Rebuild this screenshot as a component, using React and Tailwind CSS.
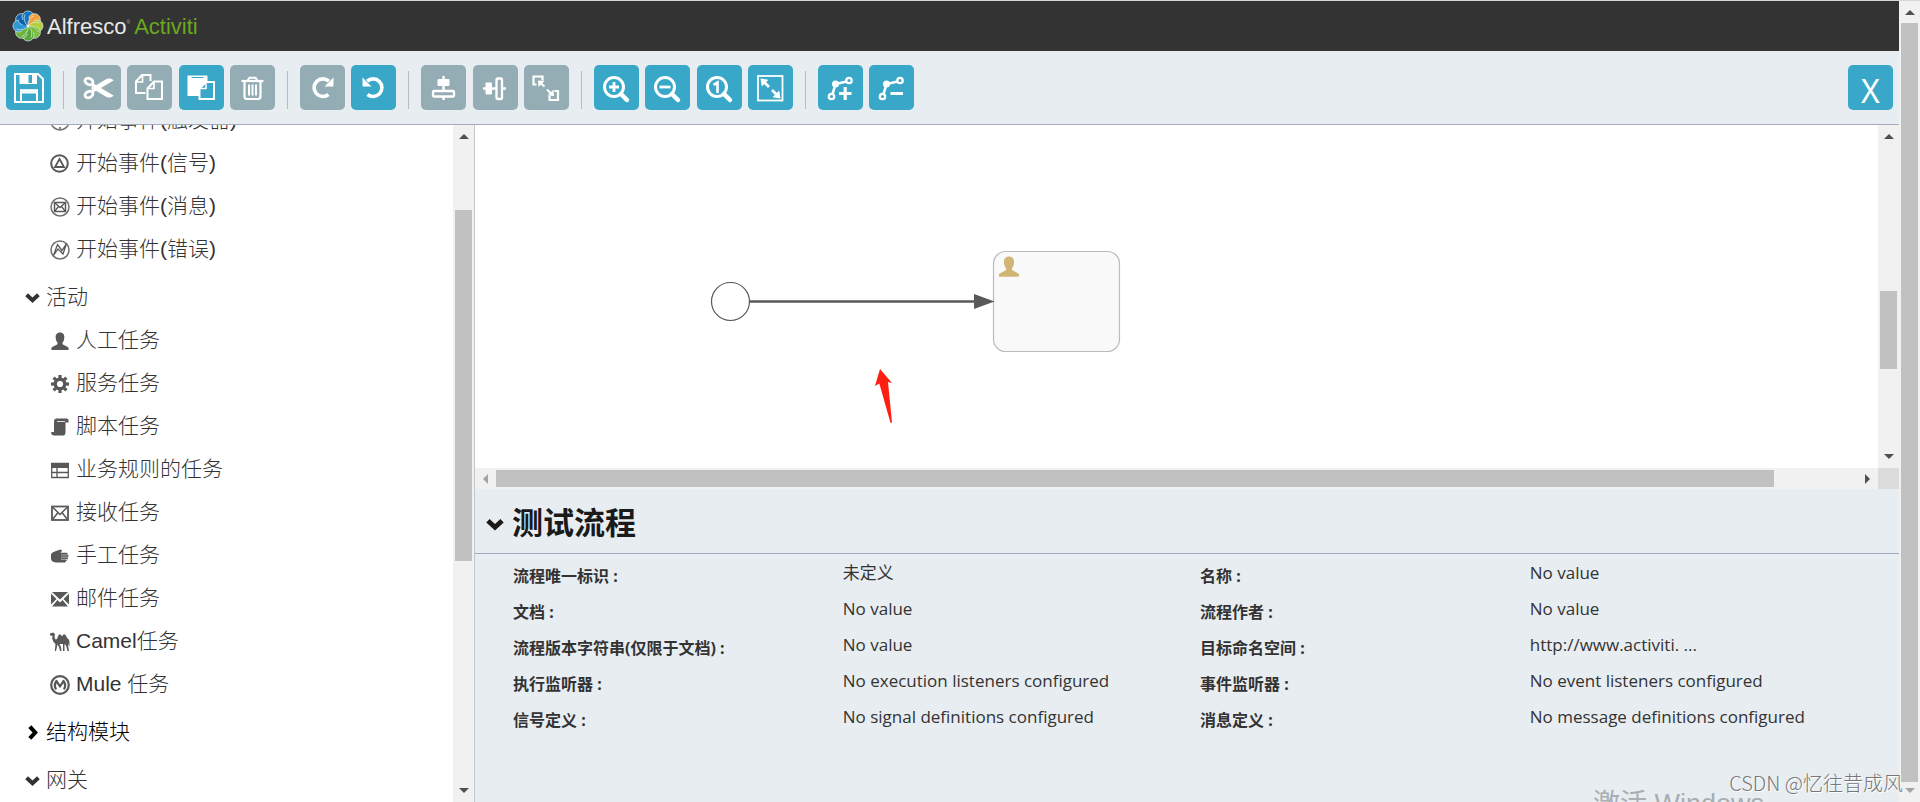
import React from "react";

const LATIN_CJK = "font-['Liberation_Sans','Noto_Sans_CJK_SC',sans-serif]";

function Pinwheel() {
  const petals = [
    ["#0b62ab", 315], ["#1278be", 0], ["#f6a03c", 45], ["#b5cf3a", 90],
    ["#7cbf3c", 135], ["#57a639", 180], ["#6fb53a", 225], ["#2f97d3", 270],
  ];
  return (
    <svg viewBox="0 0 32 32" className="size-8 shrink-0" aria-hidden="true">
      {petals.map(([c, a]) => (
        <circle key={a} cx="16" cy="7" r="6" fill={c} stroke="#dcebf2" strokeWidth=".7" transform={`rotate(${a} 16 16)`} />
      ))}
      {petals.map(([c, a]) => (
        <g key={a} transform={`rotate(${a} 16 16)`}>
          <path d="M16 16C12 12.500 11.500 8 13 4.500C17.500 6.500 18.500 12 16 16Z" fill={c} />
          <path d="M16 16C12 12.500 11.500 8 13 4.500" fill="none" stroke="#e3f0f5" strokeWidth=".7" />
        </g>
      ))}
      <circle cx="16" cy="16" r="1.300" fill="#fff" />
    </svg>
  );
}

const S = ({ children }) => (
  <svg viewBox="0 0 45 45" className="size-full" fill="none" stroke="#fff" strokeWidth="2" aria-hidden="true">
    {children}
  </svg>
);

const Magnifier = ({ children }) => (
  <S>
    <circle cx="20" cy="22" r="9.500" strokeWidth="3" />
    <path d="M27 29l6 6" strokeWidth="4.500" strokeLinecap="round" />
    {children}
  </S>
);

const Nodes = ({ children }) => (
  <S>
    <path d="M14 31L17.500 19L31 16" strokeWidth="2.600" />
    <circle cx="17.500" cy="19" r="3.500" fill="#fff" stroke="none" />
    <circle cx="31" cy="15.500" r="2.700" fill="#38a7c8" strokeWidth="2.300" />
    <circle cx="13.500" cy="31.500" r="2.700" fill="#38a7c8" strokeWidth="2.300" />
    {children}
  </S>
);

const toolIcons = {
  save: (
    <S>
      <path d="M9 9H32L37 14V37H9Z" strokeWidth="2" />
      <path d="M15 36V27.500H31V36" />
      <path d="M14 25.500H32" strokeWidth="2.600" />
      <path d="M13.500 9H31V19H13.500Z" fill="#fff" stroke="none" />
      <rect x="22.500" y="10" width="3.500" height="8" fill="#38a7c8" stroke="none" />
    </S>
  ),
  cut: (
    <S>
      <ellipse cx="13" cy="16.500" rx="4.200" ry="3" transform="rotate(25 13 16.500)" strokeWidth="2.800" />
      <ellipse cx="13" cy="29.500" rx="4.200" ry="3" transform="rotate(-25 13 29.500)" strokeWidth="2.800" />
      <path d="M16.500 18L37.500 30.500C35.500 33.200 32 32.800 30 31.800L15.500 23Z" fill="#fff" stroke="none" />
      <path d="M16.500 28L37.500 15.500C35.500 12.800 32 13.200 30 14.200L15.500 23Z" fill="#fff" stroke="none" />
    </S>
  ),
  copy: (
    <S>
      <path d="M18.500 28H9V16.500L15 10H23.500V16" strokeWidth="2" />
      <path d="M15.500 10V17H9" strokeWidth="1.700" />
      <path d="M27 16.500H35V34H20.500V23.500Z" strokeWidth="2" />
      <path d="M27 16.500V23.500H20.500" strokeWidth="1.700" />
    </S>
  ),
  paste: (
    <S>
      <path d="M8.500 10.500H28.500V16.500L20 24V31H8.500Z" fill="#fff" stroke="none" />
      <path d="M12.500 12.500H24.500" stroke="#38a7c8" strokeWidth="1" />
      <path d="M27 17H35V34H20.500V23.500Z" strokeWidth="2" />
      <path d="M27 17V23.500H20.500" strokeWidth="1.500" />
    </S>
  ),
  trash: (
    <S>
      <path d="M11.500 16H33.500" strokeWidth="2.200" />
      <path d="M17.500 15.500L19.500 12.800H25.500L27.500 15.500" strokeWidth="2" />
      <path d="M14.500 17V31.500Q14.500 34 17 34H28Q30.500 34 30.500 31.500V17" strokeWidth="2.200" />
      <path d="M19 19.500V30.500M22.500 19.500V30.500M26 19.500V30.500" strokeWidth="2" />
    </S>
  ),
  redo: (
    <S>
      <path d="M28.500 29.500A8.800 8.800 0 1 1 28.800 16.200" strokeWidth="3.600" />
      <path d="M33.500 12.500V21.500H24.500Z" fill="#fff" stroke="none" />
    </S>
  ),
  undo: (
    <S>
      <path d="M16.500 29.500A8.800 8.800 0 1 0 16.200 16.200" strokeWidth="3.600" />
      <path d="M11.500 12.500V21.500H20.500Z" fill="#fff" stroke="none" />
    </S>
  ),
  alignV: (
    <S>
      <path d="M22.500 11V35" strokeWidth="2.500" />
      <rect x="16.500" y="14" width="12" height="7" rx="1" fill="#fff" stroke="none" />
      <rect x="12" y="26" width="21" height="5.500" rx="1" fill="#94adb4" strokeWidth="2.300" />
    </S>
  ),
  alignH: (
    <S>
      <path d="M10 23.500H33" strokeWidth="2.500" />
      <rect x="12.500" y="17.500" width="6.500" height="12" rx="1" fill="#fff" stroke="none" />
      <rect x="23.500" y="13.500" width="5.500" height="20.500" rx="1" fill="#94adb4" strokeWidth="2.300" />
    </S>
  ),
  sameSize: (
    <S>
      <path d="M12.500 19.500H9.500V11.500H18.500V15.500" strokeWidth="2.200" />
      <path d="M30.500 26H34V35H25.500V31" strokeWidth="2.200" />
      <path d="M14 15.500L20.500 16L14.500 22ZM30 31L23.500 30.500L29.500 24.500Z" fill="#fff" stroke="none" />
      <path d="M16 17.500L20.500 21.500M23 24.500L27 28.500" strokeWidth="2" />
    </S>
  ),
  zoomIn: <Magnifier><path d="M15 22H25M20 17V27" strokeWidth="2.800" /></Magnifier>,
  zoomOut: <Magnifier><path d="M14.500 22H25.500" strokeWidth="2.800" /></Magnifier>,
  zoomActual: <Magnifier><path d="M16.500 19.800L20.500 17.500V28" strokeWidth="2.600" /></Magnifier>,
  zoomFit: (
    <S>
      <rect x="10" y="11" width="24.500" height="24.500" strokeWidth="1.800" />
      <path d="M12.500 13.500L20.500 14.800L13.800 21.500ZM32.500 33.500L24.500 32.200L31.200 25.500Z" fill="#fff" stroke="none" />
      <path d="M15.500 16.500L21 22M24 25L29.500 30.500" strokeWidth="2.800" />
    </S>
  ),
  addBend: <Nodes><path d="M21 28.500H33.500M27.200 22V35" strokeWidth="3.200" /></Nodes>,
  removeBend: <Nodes><path d="M21.500 28.500H34" strokeWidth="3" /></Nodes>,
};

const groups = [
  { width: "w-[45px]", items: [["save", "保存", true]] },
  { width: "w-[199px]", items: [["cut", "剪切", false], ["copy", "复制", false], ["paste", "粘贴", true], ["trash", "删除", false]] },
  { width: "w-[96px]", items: [["redo", "重做", false], ["undo", "撤销", true]] },
  { width: "w-[148px]", items: [["alignV", "垂直对齐", false], ["alignH", "水平对齐", false], ["sameSize", "相同大小", false]] },
  { width: "w-[199px]", items: [["zoomIn", "放大", true], ["zoomOut", "缩小", true], ["zoomActual", "实际大小", true], ["zoomFit", "适合屏幕", true]] },
  { width: "w-[96px]", items: [["addBend", "添加拐点", true], ["removeBend", "删除拐点", true]] },
];

function Toolbar() {
  return (
    <div className="flex h-[74px] shrink-0 items-start justify-between border-b border-[#a3abbd] bg-[#e8edf1] px-1.5 pt-3.5">
      <div className="flex">
        {groups.map((g, i) => (
          <React.Fragment key={i}>
            {i > 0 && <div className="mx-3 mt-1.5 h-[38px] w-px bg-[#b4bcc7]" />}
            <div className={`flex justify-between ${g.width}`}>
              {g.items.map(([icon, label, on]) => (
                <button
                  key={icon}
                  type="button"
                  aria-label={label}
                  disabled={!on}
                  className={`size-[45px] rounded-[5px] ${on ? "bg-[#38a7c8]" : "bg-[#94adb4]"}`}
                >
                  {toolIcons[icon]}
                </button>
              ))}
            </div>
          </React.Fragment>
        ))}
      </div>
      <button type="button" className="flex size-[45px] items-center justify-center rounded-[5px] bg-[#38a7c8] pt-1.5 font-['Noto_Sans',sans-serif] text-[32px] leading-none text-white">
        X
      </button>
    </div>
  );
}

const P = ({ children }) => (
  <svg viewBox="0 0 20 20" className="mt-[3px] size-5 shrink-0" fill="none" stroke="#585858" strokeWidth="1.500" aria-hidden="true">
    {children}
  </svg>
);
const F = { fill: "#585858", stroke: "none" };
const Ring = () => <circle cx="10" cy="10" r="9" stroke="#707070" />;

const USER_PATH = "M10 .5C13.500 .5 15 3 14.800 6C14.700 8.500 14 10.500 12.800 11.700V13.500L19.500 17.200V20H.5V17.200L7.200 13.500V11.700C6 10.500 5.300 8.500 5.200 6C5 3 6.500 .5 10 .5Z";

const paletteIcons = {
  timer: <P><Ring /><path d="M10 16v2" /></P>,
  signal: <P><circle cx="9.500" cy="9.500" r="8.300" strokeWidth="2" /><path d="M9.500 5L14 13H5Z" strokeWidth="1.800" /></P>,
  message: <P><Ring /><rect x="4.500" y="5.500" width="11" height="9" /><path d="M4.500 5.500L10 10.500L15.500 5.500M4.500 14.500L8.500 9.500M15.500 14.500L11.500 9.500" strokeWidth="1.300" /></P>,
  error: <P><Ring /><path d="M3.500 15.500L7.500 4.500L12 10.500L16.500 3.500L13 14L8 9Z" strokeWidth="1.300" /></P>,
  user: <P><path {...F} transform="translate(1 1) scale(.9)" d={USER_PATH} /></P>,
  service: (
    <P>
      <circle cx="10" cy="10" r="4.800" strokeWidth="3.400" />
      {[0, 45, 90, 135, 180, 225, 270, 315].map((a) => (
        <rect key={a} {...F} x="8.400" y="1" width="3.200" height="3.500" transform={`rotate(${a} 10 10)`} />
      ))}
    </P>
  ),
  script: <P><path {...F} d="M6 1.500H17Q19 2 18.500 5.500H15.500V15Q15.500 18.500 13 18.500H3.500Q1 18 1.200 15H4V4Q4 2 6 1.500Z" /><path d="M7 4.500H15" stroke="#fff" strokeWidth=".8" /></P>,
  rule: <P><path d="M1.700 3.500H18.300V17.500H1.700ZM1.700 12.500H18.300M7 7V17.500" strokeWidth="1.300" /><path {...F} d="M1 3H19V8H1Z" /></P>,
  receive: <P><rect x="2" y="3.500" width="16" height="13.500" strokeWidth="1.800" /><path d="M3 4.500L10 11.500L17 4.500M3 16L8 9.500M17 16L12 9.500" strokeWidth="1.500" /></P>,
  manual: <P><path {...F} d="M1 8Q2.500 6 6 5L10.500 3.500Q12.500 3.500 11.500 5.500L10.500 6.800H17Q18.500 7.500 17 8.800H18Q19.500 9.800 18 11H17.800Q18.800 12 17.500 13.200H16.500Q17.200 14.500 16 15.300L15 16.500H6Q1.500 16 1 13Z" /><path d="M11 9H17.500M11 11.200H18M11 13.400H17" stroke="#fff" strokeWidth=".5" /></P>,
  mail: <P><path {...F} d="M2 3H18L10 10.500ZM1 4.500L6.500 10L1 15.500ZM19 4.500L13.500 10L19 15.500ZM2 17.500L7.500 11L10 13.500L12.500 11L18 17.500Z" /></P>,
  camel: (
    <P>
      <path {...F} d="M0 1.500L3 .5L5 2L4.500 5L5.500 7.500L7 7Q8.500 2 10 2.200Q11.500 3 12 4.500Q13 2 14.500 2.200Q16.500 3.500 17 6Q19.500 7 19.500 11V14H18.700L18.300 11L18 13.500L19 19H17.500L16 13.500L14.500 12V19H13L13 12H9.500L11 15L11.500 19H10L9 15L7.500 12.500L6 19H4.800L5.500 12Q3 10.500 2.200 6.500L2.500 3.800L0 3.500Z" />
    </P>
  ),
  mule: <P><circle cx="10" cy="10" r="8.800" strokeWidth="2.200" /><path d="M6 14.500Q3.500 10 6.500 6L10 11.500L13.500 6Q16.500 10 14 14.500" strokeWidth="2.300" strokeLinejoin="round" /></P>,
};

const Chevron = ({ className, open = true }) => (
  <svg viewBox="0 0 14 14" className={className} aria-hidden="true">
    <path
      d="M1.500 4.500L7 9.500L12.500 4.500"
      transform={open ? undefined : "rotate(-90 7 7)"}
      fill="none" stroke="currentColor" strokeWidth="3.800"
    />
  </svg>
);

const palette = [
  { items: [["timer", "开始事件(触发器)"], ["signal", "开始事件(信号)"], ["message", "开始事件(消息)"], ["error", "开始事件(错误)"]] },
  {
    title: "活动",
    items: [["user", "人工任务"], ["service", "服务任务"], ["script", "脚本任务"], ["rule", "业务规则的任务"], ["receive", "接收任务"], ["manual", "手工任务"], ["mail", "邮件任务"], ["camel", "Camel任务"], ["mule", "Mule 任务"]],
  },
  { title: "结构模块", closed: true, items: [] },
  { title: "网关", items: [] },
];

function Palette() {
  return (
    <nav className="min-w-0 flex-1 overflow-hidden bg-white text-[21px] font-light text-[#333]">
      <div className="-mt-[27px]">
        {palette.map((s, i) => (
          <section key={i}>
            {s.title && (
              <button type="button" className={`mt-[5px] flex h-[43px] items-center gap-1.5 pl-[25px] ${s.closed ? "text-black" : ""}`}>
                <Chevron className="mt-0.5 size-[15px]" open={!s.closed} />
                <span>{s.title}</span>
              </button>
            )}
            {s.items.map(([icon, label]) => (
              <div key={icon} className="flex h-[43px] items-center gap-1.5 pl-[50px]">
                {paletteIcons[icon]}
                <span>{label}</span>
              </div>
            ))}
          </section>
        ))}
      </div>
    </nav>
  );
}

const Arrow = ({ dir, faint }) => {
  const d = { up: "M0 7L5 2L10 7Z", down: "M0 3L5 8L10 3Z", left: "M7 0L2 5L7 10Z", right: "M3 0L8 5L3 10Z" }[dir];
  return (
    <svg viewBox="0 0 10 10" className="size-2.5 shrink-0" aria-hidden="true">
      <path d={d} fill={faint ? "#a3a3a3" : "#505050"} />
    </svg>
  );
};

function VScroll({ before, size, after, faintEnd }) {
  return (
    <div className="flex w-[21px] shrink-0 flex-col items-center bg-[#f1f1f1] py-[7px]" aria-hidden="true">
      <Arrow dir="up" />
      <div style={{ flexGrow: before }} />
      <div className="w-[17px] bg-[#c1c1c1]" style={{ flexGrow: size }} />
      <div style={{ flexGrow: after }} />
      <Arrow dir="down" faint={faintEnd} />
    </div>
  );
}

function HScroll() {
  return (
    <div className="flex h-[21px] shrink-0 bg-[#f1f1f1]" aria-hidden="true">
      <div className="flex flex-1 items-center px-1.5">
        <Arrow dir="left" faint />
        <div className="w-[5px]" />
        <div className="h-[17px] bg-[#c1c1c1]" style={{ flexGrow: 1278 }} />
        <div style={{ flexGrow: 88 }} />
        <Arrow dir="right" />
      </div>
      <div className="w-[21px] bg-[#dcdcdc]" />
    </div>
  );
}

function Canvas() {
  return (
    <div className="flex min-h-0 flex-[343] bg-white">
      <div className="min-w-0 flex-1 overflow-hidden">
        <svg width="700" height="343" viewBox="475 125 700 343" role="img" aria-label="流程图">
          <circle cx="730.500" cy="301.500" r="19" fill="#fff" stroke="#585858" strokeWidth="1.200" />
          <path d="M749.500 301.500H976" stroke="#585858" strokeWidth="2.600" />
          <rect x="993.500" y="251.500" width="126" height="100" rx="12" fill="#f9f9f9" stroke="#bbb" strokeWidth="1.200" />
          <path d="M974 294L994.500 301.500L974 309Z" fill="#585858" />
          <path d={USER_PATH} transform="translate(998.500 256) scale(1.050 1.040)" fill="#d1b575" />
          <path d="M880 369L892 383L888 382L892 422.700H890.500L879.300 383.500L875 386Z" fill="#ff1f12" />
        </svg>
      </div>
      <VScroll before={149} size={78} after={82} />
    </div>
  );
}

const properties = [
  ["流程唯一标识", "未定义"], ["名称", "No value"],
  ["文档", "No value"], ["流程作者", "No value"],
  ["流程版本字符串(仅限于文档)", "No value"], ["目标命名空间", "http://www.activiti. ..."],
  ["执行监听器", "No execution listeners configured"], ["事件监听器", "No event listeners configured"],
  ["信号定义", "No signal definitions configured"], ["消息定义", "No message definitions configured"],
];

function Properties() {
  return (
    <section className="flex-[313] overflow-hidden bg-[#e8edf1] font-['Noto_Sans','Noto_Sans_CJK_SC',sans-serif] text-[#333]">
      <h2 className="flex h-[65px] items-center border-b border-[#a3abbd] pl-[11px] pt-0.5 text-[31px] font-bold text-[#1a1a1a]">
        <button type="button" className="flex items-center gap-2">
          <Chevron className="mt-1 size-[18px]" />
          <span>测试流程</span>
        </button>
      </h2>
      <dl className="grid grid-cols-2 pl-[38px] pr-3 pt-[3px] text-base">
        {properties.map(([label, value]) => (
          <div key={label} className="flex h-9 items-center">
            <dt className="w-[48%] pt-px font-bold">{label}&nbsp;:</dt>
            <dd className="pb-1 font-['Open_Sans','Noto_Sans_CJK_SC',sans-serif] text-[17px]">{value}</dd>
          </div>
        ))}
      </dl>
    </section>
  );
}

export default function App() {
  return (
    <div className={`relative flex h-screen overflow-hidden ${LATIN_CJK}`}>
      <div className="flex min-w-0 flex-1 flex-col">
        <header className="flex h-[51px] shrink-0 items-center border-t border-[#d5d8d8] bg-[#333] pl-3 text-[22px] leading-none">
          <Pinwheel />
          <span className="ml-[3px] pt-0.5 text-[#e8e8e8]">Alfresco</span>
          <span className="mb-2 text-[5px] text-[#aaa]">®</span>
          <span className="ml-1 pt-0.5 text-[#6aa91f]">Activiti</span>
        </header>
        <Toolbar />
        <main className="flex min-h-0 flex-1">
          <aside className="flex w-[475px] shrink-0 border-r border-[#c3c6ca]">
            <Palette />
            <VScroll before={68} size={351} after={224} />
          </aside>
          <div className="flex min-w-0 flex-1 flex-col">
            <Canvas />
            <HScroll />
            <Properties />
          </div>
        </main>
      </div>
      <div className="flex border-t border-[#d5d8d8]">
        <VScroll before={5} size={759} after={3} faintEnd />
      </div>
      <div className="pointer-events-none absolute -bottom-4 left-[1593px] text-[27px] leading-none text-[#a9aeb1]">激活 Windows</div>
      <div className="pointer-events-none absolute bottom-1.5 right-[17px] font-['Noto_Sans_CJK_SC',sans-serif] text-[20px] leading-[26px] font-light text-[#777] [text-shadow:1px_1px_0_#fff]">CSDN @忆往昔成风</div>
    </div>
  );
}
